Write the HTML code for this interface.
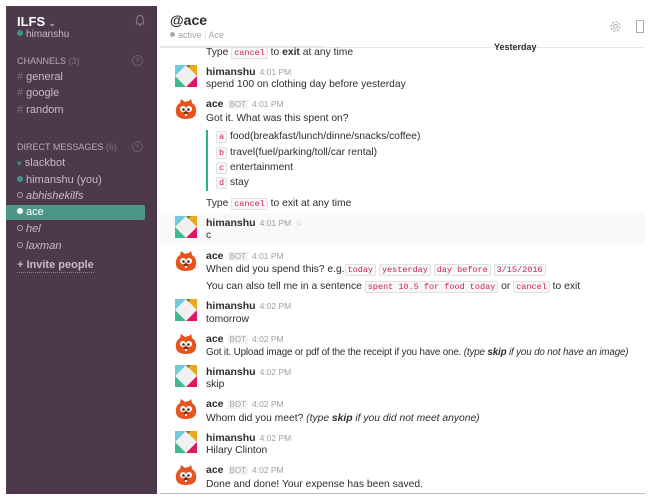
<!DOCTYPE html>
<html><head><meta charset="utf-8"><style>
*{margin:0;padding:0;box-sizing:border-box}
body{width:650px;height:500px;background:#fff;font-family:"Liberation Sans",sans-serif;position:relative;overflow:hidden;color:#2c2d30}
.a{position:absolute;white-space:nowrap}
#sb{position:absolute;left:6px;top:6px;width:151px;height:488px;background:#4d394b;color:#c5bbc3;font-size:11px}
#sb .a{font-size:11px}
.hd{font-size:9px!important;color:#b6a9b4}
.hd span{color:#7f6e7c}
.hash{color:#7f6e7c}
.dot{display:inline-block;width:6px;height:6px;border-radius:50%;background:#38978d;margin-right:3px;vertical-align:1px}
.odot{display:inline-block;width:6px;height:6px;border-radius:50%;border:1px solid #a99ca7;margin-right:3px;vertical-align:1px}
.n{font-weight:bold;font-size:10.5px;color:#2c2d30}
.t{font-size:8.5px;color:#a0a0a2;font-weight:normal;margin-left:4px}
.bot{font-size:8px;color:#a8a8a8;background:#f2f2f2;padding:0 2px;margin-left:4px;font-weight:normal}
.m{font-size:10.3px;color:#2c2d30}
code{font-family:"Liberation Mono",monospace;font-size:8.5px;color:#c25;background:#f7f7f9;border:1px solid #e1e1e8;border-radius:2px;padding:0 2px}
.av{position:absolute;left:175px;width:22px;height:22px}
</style></head><body>
<div id="sb">
<div class="a" style="left:11px;top:8px;color:#fff;font-weight:bold;font-size:13px">ILFS <span style="font-size:8px;color:#c5bbc3">⌄</span></div>
<div class="a" style="left:11px;top:23px;font-size:10px"><span class="dot"></span>himanshu</div>
<svg class="a" style="left:128px;top:8px" width="12" height="13" viewBox="0 0 12 13"><path d="M2 10 Q3 8 3 5 Q3 1.5 6 1.5 Q9 1.5 9 5 Q9 8 10 10 Z M5 11.5 H7" fill="none" stroke="#8e7f8c" stroke-width="1"/></svg>
<div class="a hd" style="left:11px;top:50px">CHANNELS <span>(3)</span></div>
<div class="a" style="left:126px;top:49px;width:11px;height:11px;border:1px solid #6e5c6c;border-radius:50%;color:#6e5c6c;font-size:10px;line-height:9px;text-align:center">+</div>
<div class="a" style="left:11px;top:65px"><span class="hash">#</span> general</div>
<div class="a" style="left:11px;top:81px"><span class="hash">#</span> google</div>
<div class="a" style="left:11px;top:98px"><span class="hash">#</span> random</div>
<div class="a hd" style="left:11px;top:136px">DIRECT MESSAGES <span>(6)</span></div>
<div class="a" style="left:126px;top:135px;width:11px;height:11px;border:1px solid #6e5c6c;border-radius:50%;color:#6e5c6c;font-size:10px;line-height:9px;text-align:center">+</div>
<div class="a" style="left:11px;top:151px"><span style="color:#38978d;font-size:8px">♥</span> slackbot</div>
<div class="a" style="left:11px;top:168px"><span class="dot"></span>himanshu (you)</div>
<div class="a" style="left:11px;top:184px;font-style:italic"><span class="odot"></span>abhishekilfs</div>
<div class="a" style="left:0;top:199px;width:139px;height:15px;background:#4c9689;border-radius:0 2px 2px 0"></div>
<div class="a" style="left:11px;top:200px;color:#fff"><span class="dot" style="background:#fff"></span>ace</div>
<div class="a" style="left:11px;top:217px;font-style:italic"><span class="odot"></span>hel</div>
<div class="a" style="left:11px;top:234px;font-style:italic"><span class="odot"></span>laxman</div>
<div class="a" style="left:11px;top:253px;font-weight:bold;border-bottom:1px dotted #8e7f8c;padding-bottom:1px">+ Invite people</div>
</div>

<div class="a" style="left:170px;top:12px;font-weight:bold;font-size:14px">@ace</div>
<div class="a" style="left:170px;top:30px;font-size:9px;color:#a8a8a8"><span class="dot" style="background:#aaa;width:5px;height:5px"></span>active <span style="color:#ddd">|</span> Ace</div>
<svg class="a" style="left:609px;top:20px" width="13" height="13" viewBox="0 0 13 13"><circle cx="6.5" cy="6.5" r="4.5" fill="none" stroke="#aaa" stroke-width="1.3" stroke-dasharray="2 1.5"/><circle cx="6.5" cy="6.5" r="2" fill="none" stroke="#aaa"/></svg>
<div class="a" style="left:636px;top:20px;width:8px;height:13px;border:1px solid #aaa;border-radius:1px"></div>
<div class="a" style="left:160px;top:46px;width:165px;height:1px;background:#e5e5e5"></div>
<div class="a" style="left:160px;top:47px;width:485px;height:1px;background:#e8e8e8"></div>
<div class="a" style="left:494px;top:42px;font-size:9px;font-weight:bold;color:#2c2d30">Yesterday</div>
<div class="a" style="left:544px;top:47px;width:100px;height:1px;background:#e5e5e5"></div>

<div class="a" style="left:160px;top:213px;width:485px;height:32px;background:#f9f9f9"></div>
<div class="a" style="left:160px;top:493px;width:485px;height:1px;background:#bbb"></div>

<svg width="0" height="0" style="position:absolute"><defs>
<g id="sl"><rect width="22" height="22" rx="2" fill="#eee"/><polygon points="0,0 11,0 0,11" fill="#6ecadc"/><polygon points="11,0 22,0 22,11" fill="#e9a820"/><polygon points="22,11 22,22 11,22" fill="#e01563"/><polygon points="0,11 11,22 0,22" fill="#3eb991"/><polygon points="11,0 16,0 13,3" fill="#7b7b3b"/><polygon points="11,1 21,11 11,21 1,11" fill="#f0f0f0"/></g>
<g id="sq"><path d="M1 15 Q0 8 5 5 L6 1 Q9 3 10 4 Q12 3 14 3 L16 1 Q17 4 17 5 Q22 8 21 15 Q20 21 11 21 Q2 21 1 15Z" fill="#e8541f"/><circle cx="8" cy="11" r="3" fill="#fff"/><circle cx="14" cy="11" r="3" fill="#fff"/><circle cx="8.5" cy="11.5" r="1.3" fill="#333"/><circle cx="13.5" cy="11.5" r="1.3" fill="#333"/><ellipse cx="11" cy="15" rx="2" ry="1.2" fill="#7a2a10"/><rect x="10" y="16" width="2" height="2" fill="#fff"/></g>
</defs></svg>

<div class="a m" style="left:206px;top:47px">Type <code>cancel</code> to <b>exit</b> at any time</div>

<svg class="av" style="top:65px" viewBox="0 0 22 22"><use href="#sl"/></svg>
<div class="a n" style="left:206px;top:66px">himanshu<span class="t">4:01 PM</span></div>
<div class="a m" style="left:206px;top:79px">spend 100 on clothing day before yesterday</div>

<svg class="av" style="top:98px" viewBox="0 0 22 22"><use href="#sq"/></svg>
<div class="a n" style="left:206px;top:98px">ace<span class="bot">BOT</span><span class="t">4:01 PM</span></div>
<div class="a m" style="left:206px;top:113px">Got it. What was this spent on?</div>
<div class="a" style="left:206px;top:130px;width:2px;height:61px;background:#2ab27b"></div>
<div class="a m" style="left:216px;top:131px"><code>a</code> food(breakfast/lunch/dinne/snacks/coffee)</div>
<div class="a m" style="left:216px;top:147px"><code>b</code> travel(fuel/parking/toll/car rental)</div>
<div class="a m" style="left:216px;top:162px"><code>c</code> entertainment</div>
<div class="a m" style="left:216px;top:177px"><code>d</code> stay</div>
<div class="a m" style="left:206px;top:198px">Type <code>cancel</code> to exit at any time</div>

<svg class="av" style="top:216px" viewBox="0 0 22 22"><use href="#sl"/></svg>
<div class="a n" style="left:206px;top:217px">himanshu<span class="t">4:01 PM</span><span class="t" style="color:#bbb">☆</span></div>
<div class="a m" style="left:206px;top:230px">c</div>

<svg class="av" style="top:250px" viewBox="0 0 22 22"><use href="#sq"/></svg>
<div class="a n" style="left:206px;top:250px">ace<span class="bot">BOT</span><span class="t">4:01 PM</span></div>
<div class="a m" style="left:206px;top:264px">When did you spend this? e.g.<code>today</code> <code>yesterday</code> <code>day before</code> <code>3/15/2016</code></div>
<div class="a m" style="left:206px;top:281px">You can also tell me in a sentence <code>spent 10.5 for food today</code> or <code>cancel</code> to exit</div>

<svg class="av" style="top:299px" viewBox="0 0 22 22"><use href="#sl"/></svg>
<div class="a n" style="left:206px;top:300px">himanshu<span class="t">4:02 PM</span></div>
<div class="a m" style="left:206px;top:314px">tomorrow</div>

<svg class="av" style="top:333px" viewBox="0 0 22 22"><use href="#sq"/></svg>
<div class="a n" style="left:206px;top:333px">ace<span class="bot">BOT</span><span class="t">4:02 PM</span></div>
<div class="a m" style="left:206px;top:347px;font-size:9.8px;letter-spacing:-0.15px">Got it. Upload image or pdf of the the receipt if you have one. <i>(type <b>skip</b> if you do not have an image)</i></div>

<svg class="av" style="top:365px" viewBox="0 0 22 22"><use href="#sl"/></svg>
<div class="a n" style="left:206px;top:366px">himanshu<span class="t">4:02 PM</span></div>
<div class="a m" style="left:206px;top:379px">skip</div>

<svg class="av" style="top:398px" viewBox="0 0 22 22"><use href="#sq"/></svg>
<div class="a n" style="left:206px;top:398px">ace<span class="bot">BOT</span><span class="t">4:02 PM</span></div>
<div class="a m" style="left:206px;top:413px">Whom did you meet? <i>(type <b>skip</b> if you did not meet anyone)</i></div>

<svg class="av" style="top:431px" viewBox="0 0 22 22"><use href="#sl"/></svg>
<div class="a n" style="left:206px;top:432px">himanshu<span class="t">4:02 PM</span></div>
<div class="a m" style="left:206px;top:445px">Hilary Clinton</div>

<svg class="av" style="top:464px" viewBox="0 0 22 22"><use href="#sq"/></svg>
<div class="a n" style="left:206px;top:464px">ace<span class="bot">BOT</span><span class="t">4:02 PM</span></div>
<div class="a m" style="left:206px;top:479px">Done and done! Your expense has been saved.</div>
</body></html>
